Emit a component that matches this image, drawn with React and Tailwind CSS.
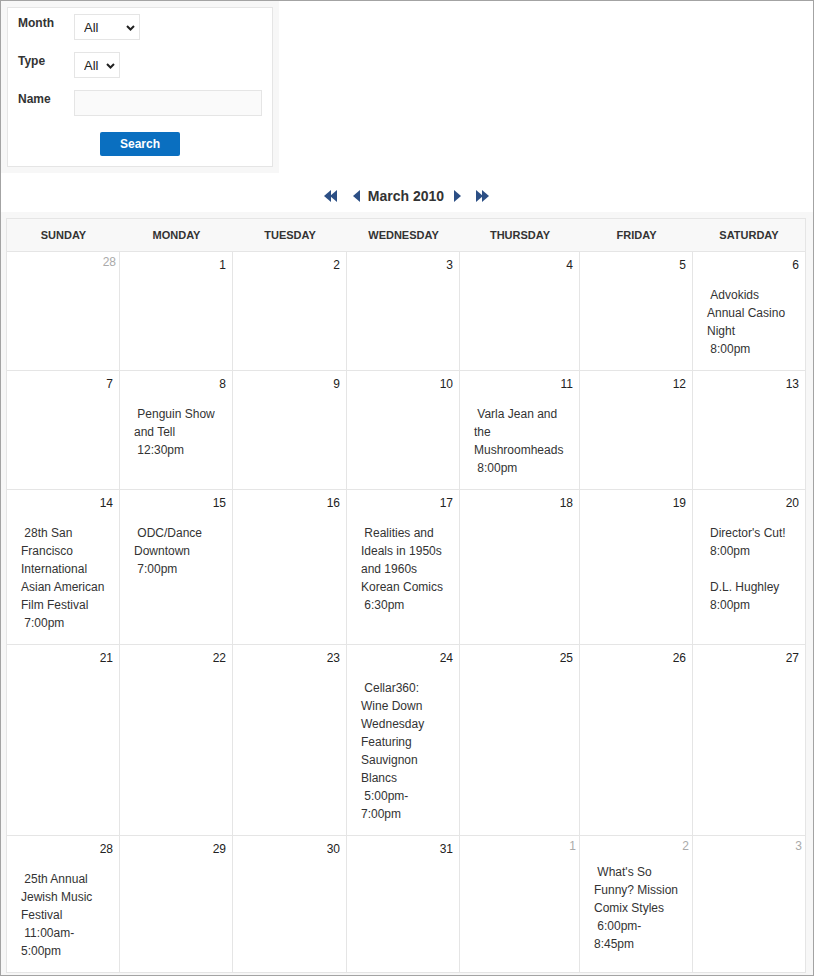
import React from "react";

const NB = "\u00a0";
const ZW = "\u200b";

const weeks = [
  [
    { d: 28, o: true },
    { d: 1 },
    { d: 2 },
    { d: 3 },
    { d: 4 },
    { d: 5 },
    { d: 6, ev: [[NB + "Advokids Annual Casino Night", NB + "8:00pm"]] },
  ],
  [
    { d: 7 },
    { d: 8, ev: [[NB + "Penguin Show and Tell", NB + "12:30pm"]] },
    { d: 9 },
    { d: 10 },
    { d: 11, ev: [[NB + "Varla Jean and the Mushroomheads", NB + "8:00pm"]] },
    { d: 12 },
    { d: 13 },
  ],
  [
    {
      d: 14,
      ev: [[NB + "28th San Francisco International Asian American Film Festival", NB + "7:00pm"]],
    },
    { d: 15, ev: [[NB + "ODC/Dance Downtown", NB + "7:00pm"]] },
    { d: 16 },
    {
      d: 17,
      ev: [[NB + "Realities and Ideals in 1950s and 1960s Korean Comics", NB + "6:30pm"]],
    },
    { d: 18 },
    { d: 19 },
    {
      d: 20,
      center: true,
      ev: [
        ["Director's Cut!", "8:00pm"],
        ["D.L. Hughley", "8:00pm"],
      ],
    },
  ],
  [
    { d: 21 },
    { d: 22 },
    { d: 23 },
    {
      d: 24,
      ev: [[NB + "Cellar360: Wine Down Wednesday Featuring Sauvignon Blancs", NB + "5:00pm-" + ZW + "7:00pm"]],
    },
    { d: 25 },
    { d: 26 },
    { d: 27 },
  ],
  [
    { d: 28, ev: [[NB + "25th Annual Jewish Music Festival", NB + "11:00am-" + ZW + "5:00pm"]] },
    { d: 29 },
    { d: 30 },
    { d: 31 },
    { d: 1, o: true },
    { d: 2, o: true, ev: [[NB + "What's So Funny? Mission Comix Styles", NB + "6:00pm-" + ZW + "8:45pm"]] },
    { d: 3, o: true },
  ],
];

const days = ["Sunday", "Monday", "Tuesday", "Wednesday", "Thursday", "Friday", "Saturday"];

function Chevron() {
  return (
    <svg
      className="absolute right-[4px] top-[10px] pointer-events-none"
      width="9"
      height="6"
      viewBox="0 0 9 6"
    >
      <polyline points="1,1 4.5,4.5 8,1" fill="none" stroke="#222" strokeWidth="2" />
    </svg>
  );
}

function LeftTri({ x = 0 }) {
  return <polygon points={`${x + 7},0 ${x},6 ${x + 7},12`} fill="#2c4f85" />;
}
function RightTri({ x = 0 }) {
  return <polygon points={`${x},0 ${x + 7},6 ${x},12`} fill="#2c4f85" />;
}

function Cell({ c, col }) {
  const last = col === 6;
  let evPad = "pl-[14px] pr-[12px]";
  if (col === 4) evPad = "pl-[14px] pr-[10px]";
  if (c.center) evPad = "pl-[17px] pr-[8px]";
  return (
    <div
      className={
        "bg-white border-b border-[#e5e5e5] pb-[12px] " + (last ? "" : "border-r")
      }
    >
      {c.o ? (
        <div className="text-right text-[12px] leading-[18px] pt-[1px] pr-[3px] text-[#aaaaaa]">
          {c.d}
        </div>
      ) : (
        <div className="text-right text-[12px] leading-[18px] pt-[4px] pr-[6px] text-[#222]">
          {c.d}
        </div>
      )}
      {c.ev && (
        <div className={"text-[12px] leading-[18px] text-[#333] " + (c.o ? "mt-[8px] " : "mt-[12px] ") + evPad}>
          {c.ev.map((e, i) => (
            <div key={i} className={i > 0 ? "mt-[18px]" : ""}>
              {e.map((l, j) => (
                <React.Fragment key={j}>
                  {j > 0 && <br />}
                  {l}
                </React.Fragment>
              ))}
            </div>
          ))}
        </div>
      )}
    </div>
  );
}

export default function App() {
  const cols = "grid grid-cols-[113px_113px_114px_113px_120px_113px_112px]";
  return (
    <div className="w-[814px] h-[976px] border border-[#a3a3a3] flex flex-col font-['Liberation_Sans',Arial,sans-serif] text-[#333] overflow-hidden">
      {/* Filter panel */}
      <div className="w-[278px] bg-[#f7f7f7] p-[6px]">
        <div className="border border-[#e5e5e5] bg-white pt-[6px] pb-[10px]">
          <div className="flex items-start pl-[10px]">
            <div className="w-[56px] text-[12px] leading-[18px] font-bold text-[#333]">Month</div>
            <div className="relative w-[66px] h-[26px] border border-[#e5e5e5] bg-white">
              <select className="appearance-none w-full h-full pl-[9px] text-[13px] text-[#222] bg-transparent outline-none">
                <option>All</option>
              </select>
              <Chevron />
            </div>
          </div>
          <div className="flex items-start pl-[10px] mt-[12px]">
            <div className="w-[56px] text-[12px] leading-[18px] font-bold text-[#333]">Type</div>
            <div className="relative w-[46px] h-[26px] border border-[#e5e5e5] bg-white">
              <select className="appearance-none w-full h-full pl-[9px] text-[13px] text-[#222] bg-transparent outline-none">
                <option>All</option>
              </select>
              <Chevron />
            </div>
          </div>
          <div className="flex items-start pl-[10px] mt-[12px]">
            <div className="w-[56px] text-[12px] leading-[18px] font-bold text-[#333]">Name</div>
            <input
              type="text"
              className="w-[188px] h-[26px] border border-[#e5e5e5] bg-[#fafafa] outline-none text-[12px] px-[6px]"
            />
          </div>
          <div className="flex justify-center mt-[16px]">
            <button className="w-[80px] h-[24px] bg-[#0a6fc0] text-white font-bold text-[12px] rounded-[2px]">
              Search
            </button>
          </div>
        </div>
      </div>

      {/* Month navigation */}
      <div className="h-[39px] pt-[13px] flex justify-center items-start">
        <div className="h-[20px] flex items-center">
          <svg width="14" height="12" viewBox="0 0 14 12" className="mr-[15px]">
            <LeftTri x={0} />
            <LeftTri x={6} />
          </svg>
          <svg width="7" height="12" viewBox="0 0 7 12" className="mr-[8px]">
            <LeftTri x={0} />
          </svg>
          <span className="text-[14px] leading-[20px] font-bold text-[#333]">March 2010</span>
          <svg width="7" height="12" viewBox="0 0 7 12" className="ml-[10px]">
            <RightTri x={0} />
          </svg>
          <svg width="14" height="12" viewBox="0 0 14 12" className="ml-[15px]">
            <RightTri x={0} />
            <RightTri x={6} />
          </svg>
        </div>
      </div>

      {/* Calendar */}
      <div className="flex-1 bg-[#f7f7f7] pl-[5px] pt-[6px]">
        <div className="w-[800px] border-l border-r border-t border-[#e5e5e5]">
          <div className={cols + " h-[33px] border-b border-[#e5e5e5] bg-[#f8f8f8]"}>
            {days.map((d) => (
              <div
                key={d}
                className="flex items-center justify-center text-[11px] font-bold uppercase text-[#333]"
              >
                {d}
              </div>
            ))}
          </div>
          {weeks.map((w, wi) => (
            <div key={wi} className={cols}>
              {w.map((c, ci) => (
                <Cell key={ci} c={c} col={ci} />
              ))}
            </div>
          ))}
        </div>
      </div>
    </div>
  );
}
